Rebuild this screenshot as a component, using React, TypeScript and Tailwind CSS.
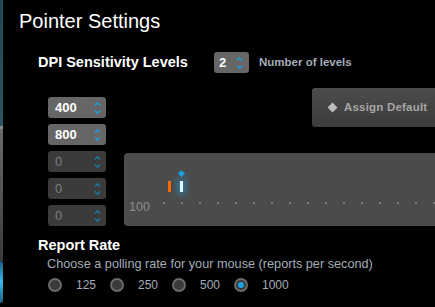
import React from 'react';

const font = { fontFamily: '"Liberation Sans", Arial, sans-serif' };

function Chevrons({ dim = false }: { dim?: boolean }) {
  const c = dim ? '#1a7fae' : '#1ba1e2';
  return (
    <svg width="7" height="14" viewBox="0 0 7 14" className="flex-none">
      <path d="M0.8 4.6 L3.5 1.8 L6.2 4.6" fill="none" stroke={c} strokeWidth="1.3" />
      <path d="M0.8 9.4 L3.5 12.2 L6.2 9.4" fill="none" stroke={c} strokeWidth="1.3" />
    </svg>
  );
}

function DpiInput({ value, active }: { value: string; active: boolean }) {
  return (
    <div
      className={
        'flex h-[21px] w-[58px] items-center justify-between rounded-[3px] pl-[7px] pr-[5px] ' +
        (active ? 'bg-[#666666]' : 'bg-[#3b3b3b]')
      }
    >
      <span
        className={
          'text-[13px] leading-none ' +
          (active ? 'font-bold text-white' : 'text-[#7f7f7f]')
        }
      >
        {value}
      </span>
      <Chevrons dim={!active} />
    </div>
  );
}

function Radio({ label, checked }: { label: string; checked?: boolean }) {
  return (
    <div className="flex w-[62px] items-center">
      <span className="flex h-[14px] w-[14px] items-center justify-center rounded-full border-2 border-[#6a6a6a] bg-[#3a3a3a]">
        {checked && <span className="h-[6px] w-[6px] rounded-full bg-[#1ba1e2]" />}
      </span>
      <span className="ml-[14px] text-[12px] text-[#a3adb8]">{label}</span>
    </div>
  );
}

export default function App() {
  const dots = Array.from({ length: 17 }, (_, i) => i);
  return (
    <div className="flex h-[307px] w-[435px] overflow-hidden bg-black" style={font}>
      {/* left edge of the neighbouring panel */}
      <div className="flex w-[3px] flex-none flex-col">
        <div className="h-[126px] bg-gradient-to-b from-[#1d4a56] to-[#2a5560]" />
        <div className="h-[3px] bg-[#8a8a8a]" />
        <div className="flex-1 bg-gradient-to-b from-[#6a6a6a] to-[#3a3a3a]" />
        <div className="h-[42px] rounded-r-full bg-gradient-to-b from-[#1c5f80] via-[#3ab8f0] to-[#1c5f80]" />
        <div className="h-[4px]" />
      </div>

      <div className="flex min-w-0 flex-1 flex-col">
        <div className="pl-[16px] pt-[10px] text-[20px] leading-[23px] text-white">Pointer Settings</div>

        <div className="mt-[19px] flex h-[21px] items-center pl-[35px]">
          <span className="w-[176px] text-[14.5px] font-bold text-white">DPI Sensitivity Levels</span>
          <div className="flex h-[21px] w-[35px] items-center justify-between rounded-[3px] bg-[#666666] pl-[5px] pr-[6px]">
            <span className="text-[13px] font-bold leading-none text-white">2</span>
            <Chevrons />
          </div>
          <span className="ml-[10px] text-[11.5px] font-bold text-[#a3adb8]">Number of levels</span>
        </div>

        <div className="mt-[15px] flex">
          <div className="ml-[45px] mt-[9px] flex w-[58px] flex-none flex-col gap-[6px]">
            <DpiInput value="400" active />
            <DpiInput value="800" active />
            <DpiInput value="0" active={false} />
            <DpiInput value="0" active={false} />
            <DpiInput value="0" active={false} />
          </div>

          <div className="ml-[18px] flex w-[340px] flex-none flex-col">
            <div className="ml-[188px] flex h-[39px] w-[150px] items-center rounded-[3px] bg-gradient-to-b from-[#4c4c4c] to-[#3c3c3c] pl-[17px]">
              <span className="h-[7px] w-[7px] rotate-45 bg-[#bdbdbd]" />
              <span className="ml-[8px] text-[11.5px] font-bold tracking-[0.2px] text-[#a6a6a6]">Assign Default</span>
            </div>

            <div className="relative mt-[26px] h-[73px] rounded-[4px] bg-[#4b4b4b]">
              <span className="absolute left-[5px] top-[48px] text-[12.5px] leading-none text-[#8e8e8e]">100</span>
              <div className="absolute left-[39px] top-[49px] flex gap-[16px]">
                {dots.map((d) => (
                  <span key={d} className="h-[2px] w-[2px] rounded-full bg-[#8a8a8a]" />
                ))}
              </div>
              <span className="absolute left-[44px] top-[28px] h-[11px] w-[3px] bg-[#ff6a00]" />
              <span className="absolute left-[56px] top-[28px] h-[11px] w-[3px] bg-[#e6f8ff] shadow-[0_0_7px_2px_rgba(27,161,226,0.7)]" />
              <span className="absolute left-[55px] top-[18px] h-[5px] w-[5px] rotate-45 bg-[#1ba1e2]" />
            </div>
          </div>
        </div>

        <div className="mt-[11px] pl-[35px] text-[14.5px] font-bold leading-[17px] text-white">Report Rate</div>
        <div className="mt-[3px] pl-[44px] text-[12.7px] leading-[15px] text-[#a3adb8]">
          Choose a polling rate for your mouse (reports per second)
        </div>
        <div className="mt-[4px] flex pl-[45px]">
          <Radio label="125" />
          <Radio label="250" />
          <Radio label="500" />
          <Radio label="1000" checked />
        </div>
      </div>
    </div>
  );
}
